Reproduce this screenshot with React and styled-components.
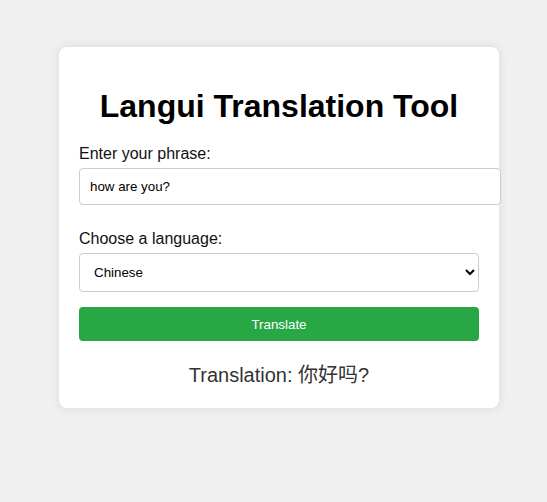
import React, { useState } from 'react';
import styled, { createGlobalStyle } from 'styled-components';

const GlobalStyle = createGlobalStyle`
  body {
    margin: 0;
    background: #f0f0f0;
    font-family: "Liberation Sans", Arial, sans-serif;
  }
`;

const Page = styled.div`
  padding: 47px 0 40px 59px;
`;

const Card = styled.div`
  width: 400px;
  padding: 20px;
  background: #fff;
  border-radius: 8px;
  box-shadow: 0 0 10px rgba(0, 0, 0, 0.1);
`;

const Title = styled.h1`
  font-size: 32px;
  text-align: center;
  margin: 21px 0 20px;
  color: #000;
`;

const Label = styled.label`
  display: block;
  font-size: 16px;
  color: #111;
  margin-bottom: 5px;
`;

const Input = styled.input`
  width: 100%;
  padding: 10px;
  margin-bottom: 25px;
  border: 1px solid #ccc;
  border-radius: 4px;
  font-family: "Liberation Sans", Arial, sans-serif;
  font-size: 13.33px;
`;

const Select = styled.select`
  width: 100%;
  padding: 10px;
  margin-bottom: 15px;
  border: 1px solid #ccc;
  border-radius: 4px;
  background: #fff;
  font-family: "Liberation Sans", Arial, sans-serif;
  font-size: 13.33px;
  color: #000;
`;

const Button = styled.button`
  display: block;
  width: 100%;
  padding: 10px 10px 9px;
  border: none;
  border-radius: 4px;
  background: #28a745;
  color: #fff;
  font-family: "Liberation Sans", Arial, sans-serif;
  font-size: 13.33px;
  cursor: pointer;
`;

const Result = styled.p`
  margin: 18px 0 0;
  text-align: center;
  font-size: 20px;
  color: #333;
  font-family: "Liberation Sans", Arial, "Noto Sans CJK SC", sans-serif;
`;

export default function App() {
    const [phrase, setPhrase] = useState('how are you?');
    const [language, setLanguage] = useState('zh');

    return (
        <Page>
            <GlobalStyle />
            <Card>
                <Title>Langui Translation Tool</Title>
                <Label htmlFor="phrase">Enter your phrase:</Label>
                <Input id="phrase" value={phrase} onChange={(e) => setPhrase(e.target.value)} />
                <Label htmlFor="language">Choose a language:</Label>
                <Select id="language" value={language} onChange={(e) => setLanguage(e.target.value)}>
                    <option value="zh">Chinese</option>
                    <option value="es">Spanish</option>
                    <option value="fr">French</option>
                </Select>
                <Button>Translate</Button>
                <Result>Translation: 你好吗?</Result>
            </Card>
        </Page>
    );
}
